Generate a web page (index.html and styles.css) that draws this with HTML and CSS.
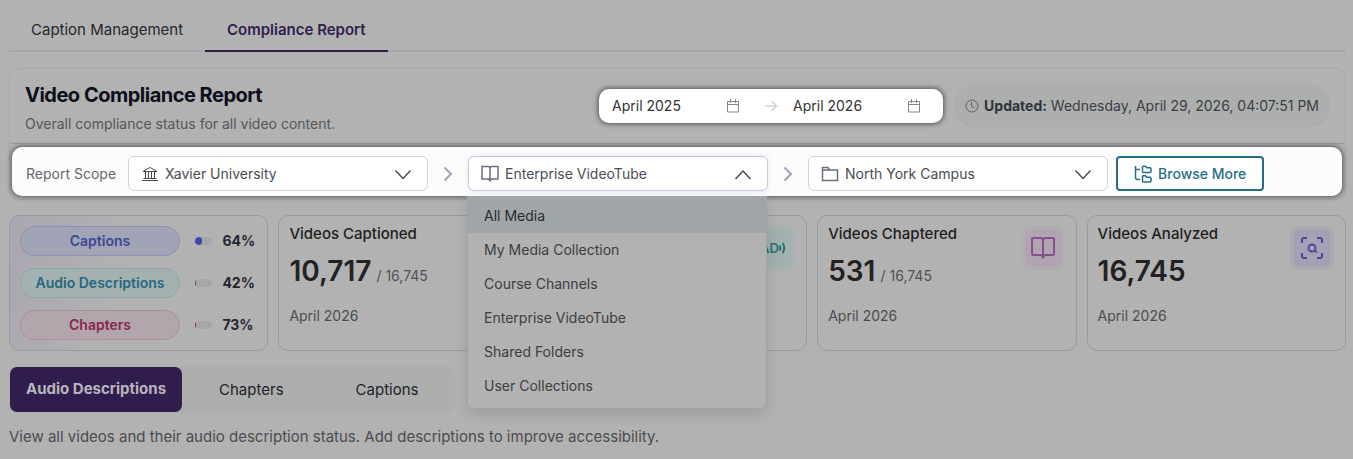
FILE: index.html
```html
<!DOCTYPE html>
<html lang="en">
<head>
    <meta charset="UTF-8">
    <meta name="viewport" content="width=device-width, initial-scale=1.0">
    <title>Video Compliance Report</title>
    <link rel="stylesheet" href="styles.css">
</head>
<body>
    <nav class="main-tabs">
        <a href="#captions" class="main-tab">Caption Management</a>
        <a href="#report" class="main-tab active">Compliance Report</a>
    </nav>

    <section class="panel">
        <header class="panel-header">
            <div class="panel-title">
                <h1>Video Compliance Report</h1>
                <p>Overall compliance status for all video content.</p>
            </div>
            <div class="date-range">
                <input type="text" class="date-input" aria-label="Start month" value="April 2025">
                <svg class="calendar" width="14" height="14" viewBox="0 0 14 14"><path d="M1.500 2.500h11v10.500h-11zM1.500 5.500h11M4.500 0v4M9.500 0v4"/></svg>
                <svg class="range-arrow" width="14" height="14" viewBox="0 0 14 14"><path d="M1 7h11M7.500 2l5 5-5 5"/></svg>
                <input type="text" class="date-input" aria-label="End month" value="April 2026">
                <svg class="calendar" width="14" height="14" viewBox="0 0 14 14"><path d="M1.500 2.500h11v10.500h-11zM1.500 5.500h11M4.500 0v4M9.500 0v4"/></svg>
            </div>
            <div class="updated">
                <svg width="14" height="14" viewBox="0 0 14 14"><circle cx="7" cy="7" r="6"/><path d="M6.500 3v4.200l3 1.800"/></svg>
                <span><strong>Updated:</strong> Wednesday, April 29, 2026, 04:07:51 PM</span>
            </div>
        </header>

        <div class="scope-bar">
            <label for="university" class="scope-label">Report Scope</label>
            <div class="scope-select">
                <svg class="scope-icon" width="18" height="18" viewBox="0 0 18 18"><path d="M1 15.500h16M2.500 13.500h13M2 6.500h14M2.500 6L9 2.500 15.500 6M4.500 7v6M7.500 7v6M10.500 7v6M13.500 7v6"/></svg>
                <select id="university">
                    <option>Xavier University</option>
                </select>
                <svg class="arrow" width="18" height="18" viewBox="0 0 18 18"><path d="M1.500 5.500L9 13.500l7.500-8"/></svg>
            </div>
            <svg class="separator" width="24" height="18" viewBox="0 0 24 18"><path d="M8.500 2.500l6.500 6.500-6.500 6.500"/></svg>
            <div class="scope-select open">
                <svg class="scope-icon book" width="18" height="18" viewBox="0 0 18 18"><path d="M9 3.500v13M9 3.500c0-1.300-.9-2-2-2H1v12.500h5.500c1.500 0 2.500.8 2.500 2.500 0-1.700 1-2.500 2.500-2.500H17V1.500h-6c-1.100 0-2 .7-2 2z"/></svg>
                <select id="library" aria-label="Library">
                    <option>Enterprise VideoTube</option>
                </select>
                <svg class="arrow" width="18" height="18" viewBox="0 0 18 18"><path d="M1.500 14L9 6l7.500 8"/></svg>
                <div class="menu">
                    <button type="button" class="selected">All Media</button>
                    <button type="button">My Media Collection</button>
                    <button type="button">Course Channels</button>
                    <button type="button">Enterprise VideoTube</button>
                    <button type="button">Shared Folders</button>
                    <button type="button">User Collections</button>
                </div>
            </div>
            <svg class="separator" width="24" height="18" viewBox="0 0 24 18"><path d="M8.500 2.500l6.500 6.500-6.500 6.500"/></svg>
            <div class="scope-select">
                <svg class="scope-icon folder" width="18" height="18" viewBox="0 0 18 18"><path d="M1.500 15.500v-13h5.500l1.500 2.500h8v10.500zM1.500 5h7"/></svg>
                <select id="campus" aria-label="Campus">
                    <option>North York Campus</option>
                </select>
                <svg class="arrow" width="18" height="18" viewBox="0 0 18 18"><path d="M1.500 5.500L9 13.500l7.500-8"/></svg>
            </div>
            <button type="button" class="browse">
                <svg width="18" height="18" viewBox="0 0 18 18"><path d="M1.500 1v11.500c0 1.500.5 2 2 2H6M1.500 4.500H6"/><path stroke-linejoin="round" d="M9.500 7.500a1 1 0 0 1-1-1V2a.8.800 0 0 1 .8-.800h2.200l1.300 1.600h3.400a.8.800 0 0 1 .8.800v2.900a1 1 0 0 1-1 1zM9.500 17a1 1 0 0 1-1-1v-4.500a.8.800 0 0 1 .8-.800h2.200l1.300 1.600h3.400a.8.800 0 0 1 .8.800V16a1 1 0 0 1-1 1z"/></svg>
                Browse More
            </button>
        </div>
    </section>

    <section class="cards">
        <div class="card summary">
            <span class="pill captions">Captions</span>
            <div class="bar"><div class="fill captions" style="width: 42%"></div></div>
            <strong>64%</strong>
            <span class="pill audio">Audio Descriptions</span>
            <div class="bar"><div class="fill audio" style="width: 6%"></div></div>
            <strong>42%</strong>
            <span class="pill chapters">Chapters</span>
            <div class="bar"><div class="fill chapters" style="width: 6%"></div></div>
            <strong>73%</strong>
        </div>
        <div class="card">
            <h2>Videos Captioned</h2>
            <p class="count">10,717 <small>/ 16,745</small></p>
            <p class="month">April 2026</p>
        </div>
        <div class="card">
            <div class="badge teal">
                <svg width="28" height="24" viewBox="0 0 28 24"><text x="1" y="17">AD</text><path d="M20.500 9.500q1.500 2.500 0 5M23.500 7q3.500 5 0 10"/></svg>
            </div>
        </div>
        <div class="card">
            <h2>Videos Chaptered</h2>
            <p class="count">531 <small>/ 16,745</small></p>
            <p class="month">April 2026</p>
            <div class="badge pink">
                <svg width="26" height="24" viewBox="0 0 26 24"><path d="M13 4.500v18M13 4.500c0-1.500-1-2.500-2.500-2.500H3a1 1 0 0 0-1 1v15a1 1 0 0 0 1 1h7c2 0 3 1 3 3 0-2 1-3 3-3h7a1 1 0 0 0 1-1V3a1 1 0 0 0-1-1h-7.500c-1.500 0-2.500 1-2.500 2.500z"/></svg>
            </div>
        </div>
        <div class="card">
            <h2>Videos Analyzed</h2>
            <p class="count">16,745</p>
            <p class="month">April 2026</p>
            <div class="badge purple">
                <svg width="24" height="24" viewBox="0 0 24 24"><path d="M2 7V4a2 2 0 0 1 2-2h3M17 2h3a2 2 0 0 1 2 2v3M22 17v3a2 2 0 0 1-2 2h-3M7 22H4a2 2 0 0 1-2-2v-3M14.500 14.500l2.500 2"/><circle cx="12" cy="12" r="3.500"/></svg>
            </div>
        </div>
    </section>

    <div class="segments">
        <button type="button" class="active">Audio Descriptions</button>
        <button type="button">Chapters</button>
        <button type="button">Captions</button>
    </div>
    <p class="hint">View all videos and their audio description status. Add descriptions to improve accessibility.</p>
</body>
</html>
```

FILE: styles.css
```css
* {
    box-sizing: border-box;
}
body {
    margin: 0;
    padding: 8px 7px 0 9px;
    background: #b2b2b2;
    color: #222226;
    font-family: Inter, "Liberation Sans", sans-serif;
    font-size: 14px;
    line-height: 20px;
}
h1, h2, p {
    margin: 0;
}
button, input, select {
    font: inherit;
    color: inherit;
}
button {
    cursor: pointer;
}
svg {
    flex: none;
    fill: none;
    stroke: currentColor;
}

/* top tabs */
.main-tabs {
    display: flex;
    border-bottom: 2px solid #a6a6a8;
}
.main-tab {
    padding: 12px 22px 10px;
    margin-bottom: -2px;
    border-bottom: 2px solid transparent;
    color: #26282c;
    font-size: 15px;
    text-decoration: none;
}
.main-tab.active {
    border-color: #301d4e;
    color: #301d4e;
    font-weight: 600;
}

/* report panel */
.panel {
    margin-top: 16px;
    border: 1px solid #a8a8aa;
    border-radius: 10px;
}
.panel-header {
    display: flex;
    align-items: center;
    height: 75px;
    padding: 0 15px;
    border-bottom: 1px solid #9b9b9f;
}
.panel-title {
    flex: 1;
    padding-top: 3px;
}
.panel-title h1 {
    color: #0c0f1a;
    font-size: 20px;
    font-weight: 700;
    line-height: 28px;
    letter-spacing: -0.5px;
}
.panel-title p {
    margin-top: 5px;
    color: #55565a;
}
.date-range {
    display: flex;
    align-items: center;
    width: 344px;
    height: 34px;
    padding: 0 22px 0 13px;
    background: #fff;
    border-radius: 10px;
    box-shadow: 0 0 5px 1px #555;
    color: #333;
}
.date-input {
    flex: 1;
    min-width: 0;
    padding: 0;
    border: 0;
    background: none;
    outline: none;
}
.calendar {
    color: #858390;
}
.range-arrow {
    margin: 0 15px 0 24px;
    color: #d0d2dc;
    stroke-width: 1.5;
}
.updated {
    display: flex;
    align-items: center;
    gap: 5px;
    height: 42px;
    margin-left: 11px;
    padding: 0 10px;
    background: #acafae;
    border: 1px solid #a8acab;
    border-radius: 21px;
    color: #3b3e46;
}
.updated svg {
    color: #5f606b;
}
.updated strong {
    color: #2f333c;
}

/* scope row */
.scope-bar {
    display: flex;
    align-items: center;
    flex-wrap: wrap;
    gap: 8px;
    margin: 3px 3px 3px 2px;
    padding: 9px 14px 5px;
    background: #fcfcfc;
    border-radius: 10px;
    box-shadow: 0 0 5px 1px #555;
}
.scope-label {
    margin-right: 4px;
    color: #66676b;
}
.scope-select {
    position: relative;
    width: 300px;
}
.scope-select select {
    display: block;
    width: 100%;
    height: 35px;
    padding: 0 36px;
    appearance: none;
    background: #fff;
    border: 1px solid #d0d2dd;
    border-radius: 6px;
    color: #4b4d53;
}
.scope-select.open select {
    border-color: #c5cad8;
    box-shadow: 0 0 6px #dfe5ee;
}
.scope-icon, .arrow {
    position: absolute;
    top: 9px;
    left: 13px;
    color: #4a4b50;
    pointer-events: none;
}
.scope-icon.book, .scope-icon.folder {
    color: #6a7080;
    stroke-width: 1.5;
}
.arrow {
    right: 16px;
    left: auto;
    stroke-width: 1.5;
}
.separator {
    color: #9ea4b5;
    stroke-width: 2;
}
.menu {
    position: absolute;
    z-index: 5;
    top: calc(100% + 5px);
    left: -1px;
    width: 300px;
    padding-bottom: 5px;
    background: #b2b2b2;
    border: 1px solid #a2a3a5;
    border-top: 0;
    border-radius: 0 0 6px 6px;
    box-shadow: 0 5px 14px rgba(0, 0, 0, 0.12);
}
.menu button {
    display: block;
    width: 100%;
    padding: 7px 16px;
    background: none;
    border: 0;
    color: #3c3e42;
    text-align: left;
}
.menu button.selected {
    padding-top: 10px;
    background: #a0a6a8;
    color: #292b33;
}
.browse {
    display: flex;
    align-items: center;
    gap: 6px;
    height: 35px;
    padding: 0 16px;
    background: #fff;
    border: 2px solid #236f84;
    border-radius: 4px;
    color: #236f84;
    font-weight: 500;
}
.browse svg {
    stroke-width: 1.5;
}

/* stat cards */
.cards {
    display: grid;
    grid-template-columns: repeat(5, 1fr);
    gap: 10px;
    margin-top: 15px;
}
.card {
    position: relative;
    height: 136px;
    padding: 8px 10px;
    border: 1px solid #9b9b9d;
    border-radius: 10px;
}
.card h2 {
    color: #1e1e20;
    font-size: 15px;
    font-weight: 500;
}
.count {
    height: 36px;
    margin-top: 9px;
    color: #222;
    font-size: 28px;
    font-weight: 600;
    line-height: 36px;
}
.count small {
    margin-left: -2px;
    color: #515154;
    font-size: 14px;
    font-weight: 400;
}
.month {
    margin-top: 17px;
    color: #4c4d50;
}
.badge {
    position: absolute;
    top: 10px;
    right: 11px;
    display: flex;
    align-items: center;
    justify-content: center;
    width: 44px;
    height: 44px;
    border: 4px solid;
    border-radius: 8px;
    stroke-width: 2;
}
.badge.teal {
    background: #a0b1af;
    border-color: #a8b0b0;
    color: #267471;
}
.badge.teal text {
    fill: currentColor;
    stroke: none;
    font-size: 13px;
    font-weight: 600;
}
.badge.pink {
    background: #b1a4b0;
    border-color: #b0acb0;
    color: #87508d;
}
.badge.purple {
    background: #a4a1b4;
    border-color: #acabb2;
    color: #5845a0;
}
.summary {
    display: grid;
    grid-template-columns: 160px 1fr 35px;
    align-items: center;
    row-gap: 12px;
    padding: 10px;
    background: linear-gradient(105deg, #aaa6b1, #b2b2b2 45%);
}
.summary strong {
    color: #24262f;
    font-weight: 700;
}
.pill {
    height: 30px;
    border: 1px solid;
    border-radius: 15px;
    font-weight: 600;
    line-height: 28px;
    text-align: center;
}
.pill.captions {
    background: #a0a4b5;
    border-color: #8c91b5;
    color: #3e4696;
}
.pill.audio {
    background: #a3b1b1;
    border-color: #88a7ab;
    color: #276780;
}
.pill.chapters {
    background: #b1a6ac;
    border-color: #b18b9b;
    color: #8b2550;
}
.bar {
    height: 8px;
    margin: 0 10px 0 15px;
    overflow: hidden;
    background: #a6a6a9;
    border-radius: 4px;
}
.fill {
    height: 100%;
}
.fill.captions {
    background: #3a48ae;
    border-radius: 4px;
}
.fill.audio {
    background: #27666c;
}
.fill.chapters {
    background: #8b2550;
}

/* bottom tabs */
.segments {
    display: flex;
    width: max-content;
    margin-top: 15px;
    padding: 1px;
    background: #acafae;
    border-radius: 8px;
}
.segments button {
    height: 45px;
    padding: 0 36px;
    background: none;
    border: 0;
    border-radius: 7px;
    font-size: 15px;
}
.segments button.active {
    margin-right: 1px;
    padding: 0 16px 2px;
    background: #301d4e;
    color: #b8b5bd;
    font-weight: 700;
}
.hint {
    margin-top: 14px;
    color: #4b4c50;
    font-size: 15px;
}
```
